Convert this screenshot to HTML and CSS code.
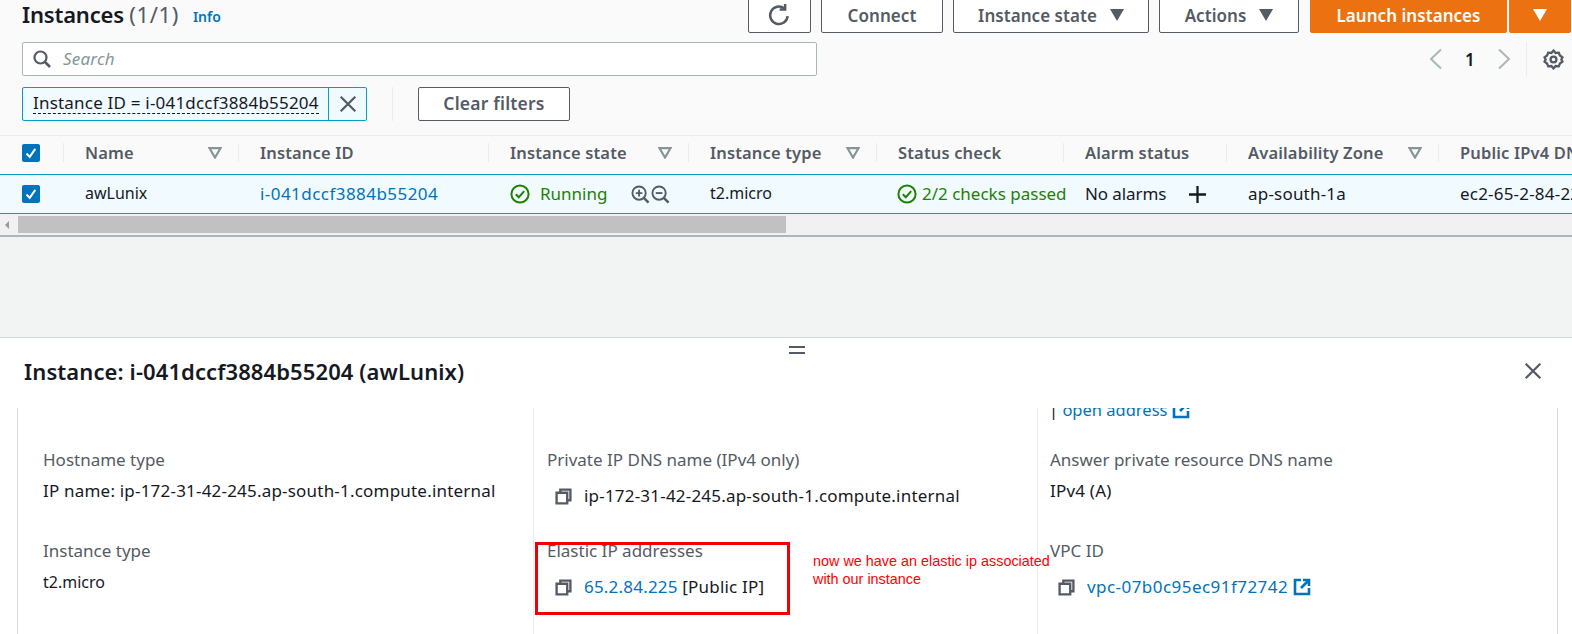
FILE: index.html
```html
<!DOCTYPE html>
<html lang="en">
<head>
<meta charset="utf-8">
<title>Instances</title>
<link rel="stylesheet" href="styles.css">
</head>
<body>
<svg class="defs" width="0" height="0" aria-hidden="true">
  <symbol id="copy" viewBox="0 0 16 16"><path d="M5 4.500V1.500h9.500v10h-3M1.500 4.500h10v10h-10z" fill="none" stroke="currentColor" stroke-width="2.200"/></symbol>
  <symbol id="ext" viewBox="0 0 18 18"><path d="M8 2H2v14h14v-6M10 2h6v6M16 2L8 10" fill="none" stroke="currentColor" stroke-width="2.600"/></symbol>
  <symbol id="tick" viewBox="0 0 20 20"><circle cx="10" cy="10" r="8.600" fill="none" stroke="currentColor" stroke-width="2"/><path d="M5.800 10.200l3 3 5.400-6" fill="none" stroke="currentColor" stroke-width="2"/></symbol>
  <symbol id="caret" viewBox="0 0 14 12"><path d="M0 0h14L7 12z" fill="currentColor"/></symbol>
  <symbol id="sort" viewBox="0 0 14 12"><path d="M1.500 1.200h11L7 10.500z" fill="none" stroke="currentColor" stroke-width="2.200"/></symbol>
  <symbol id="check" viewBox="0 0 18 18"><rect width="18" height="18" rx="2" fill="#0073bb"/><path d="M4.500 9.500l3.200 3.400 5.600-8" fill="none" stroke="#fff" stroke-width="2"/></symbol>
  <symbol id="cross" viewBox="0 0 16 16"><path d="M1.500 1.500l13 13M14.500 1.500l-13 13" fill="none" stroke="currentColor" stroke-width="2"/></symbol>
</svg>

<main class="page">
  <section class="top">
    <header class="head">
      <h1 class="title">Instances <span class="count">(1/1)</span></h1>
      <a class="info">Info</a>
      <div class="actions">
        <button class="btn btn-refresh" aria-label="Refresh">
          <svg class="i-refresh" viewBox="0 0 20 20"><path d="M16.500 10.500a7 7 0 1 1-2.600-6.100" fill="none" stroke="currentColor" stroke-width="2"/><path d="M14.500 0.800v4.400h-4.400" fill="none" stroke="currentColor" stroke-width="2"/></svg>
        </button>
        <button class="btn btn-connect">Connect</button>
        <button class="btn btn-state">Instance state <svg class="i-caret"><use href="#caret"/></svg></button>
        <button class="btn btn-actions">Actions <svg class="i-caret"><use href="#caret"/></svg></button>
        <div class="launch">
          <button class="btn btn-primary btn-launch">Launch instances</button>
          <button class="btn btn-primary btn-more" aria-label="More"><svg class="i-caret"><use href="#caret"/></svg></button>
        </div>
      </div>
    </header>

    <div class="search-row">
      <div class="search">
        <svg class="i-search" viewBox="0 0 18 18"><circle cx="7.500" cy="7.500" r="6" fill="none" stroke="currentColor" stroke-width="2.200"/><path d="M12 12l5 5" stroke="currentColor" stroke-width="2.600"/></svg>
        <span class="placeholder">Search</span>
      </div>
      <div class="pager">
        <svg class="i-chev" viewBox="0 0 14 22"><path d="M12 1.500L2 11l10 9.500" fill="none" stroke="currentColor" stroke-width="2"/></svg>
        <span class="page-num">1</span>
        <svg class="i-chev" viewBox="0 0 14 22"><path d="M2 1.500L12 11 2 20.500" fill="none" stroke="currentColor" stroke-width="2"/></svg>
      </div>
      <div class="settings">
        <svg class="i-gear" viewBox="0 0 20 20"><circle cx="10" cy="10" r="2.800" fill="none" stroke="currentColor" stroke-width="2.200"/><path d="M10 1.500l2 2.300 3-.3 1.100 2.700 2.400 1.800-1 2 1 2-2.400 1.800-1.100 2.700-3-.3-2 2.300-2-2.300-3 .3-1.100-2.700L1.500 12l1-2-1-2 2.400-1.800L5 3.500l3 .3z" fill="none" stroke="currentColor" stroke-width="2.200"/></svg>
      </div>
    </div>

    <div class="filter-row">
      <div class="token">
        <span class="token-text"><span class="token-label">Instance ID = i-041dccf3884b55204</span></span>
        <button class="token-x" aria-label="Remove"><svg class="i-x"><use href="#cross"/></svg></button>
      </div>
      <span class="filter-sep"></span>
      <button class="btn btn-clear">Clear filters</button>
    </div>
  </section>

  <section class="table">
    <div class="tr thead">
      <div class="td td-check"><svg class="i-check"><use href="#check"/></svg></div>
      <div class="td"><span class="cell">Name</span><svg class="i-sort"><use href="#sort"/></svg></div>
      <div class="td"><span class="cell">Instance ID</span></div>
      <div class="td"><span class="cell">Instance state</span><svg class="i-sort"><use href="#sort"/></svg></div>
      <div class="td"><span class="cell">Instance type</span><svg class="i-sort"><use href="#sort"/></svg></div>
      <div class="td"><span class="cell">Status check</span></div>
      <div class="td"><span class="cell">Alarm status</span></div>
      <div class="td"><span class="cell">Availability Zone</span><svg class="i-sort"><use href="#sort"/></svg></div>
      <div class="td"><span class="cell">Public IPv4 DNS</span></div>
    </div>
    <div class="tr tbody">
      <div class="td td-check"><svg class="i-check"><use href="#check"/></svg></div>
      <div class="td"><span class="cell narrow">awLunix</span></div>
      <div class="td"><a class="cell link wide">i-041dccf3884b55204</a></div>
      <div class="td">
        <svg class="i-tick"><use href="#tick"/></svg><span class="cell ok ok-run">Running</span>
        <span class="zooms">
          <svg class="i-zoom" viewBox="0 0 20 20"><circle cx="8.500" cy="8.500" r="7" fill="none" stroke="currentColor" stroke-width="2"/><path d="M13.500 13.500l5 5" stroke="currentColor" stroke-width="2.600"/><path d="M5 8.500h7M8.500 5v7" stroke="currentColor" stroke-width="2"/></svg>
          <svg class="i-zoom" viewBox="0 0 20 20"><circle cx="8.500" cy="8.500" r="7" fill="none" stroke="currentColor" stroke-width="2"/><path d="M13.500 13.500l5 5" stroke="currentColor" stroke-width="2.600"/><path d="M5 8.500h7" stroke="currentColor" stroke-width="2"/></svg>
        </span>
      </div>
      <div class="td"><span class="cell narrow">t2.micro</span></div>
      <div class="td td-status"><svg class="i-tick"><use href="#tick"/></svg><span class="cell ok ok-pass">2/2 checks passed</span></div>
      <div class="td"><span class="cell tight">No alarms</span><svg class="i-plus" viewBox="0 0 18 18"><path d="M9 0v18M0 9h18" stroke="currentColor" stroke-width="2.400"/></svg></div>
      <div class="td"><span class="cell">ap-south-1a</span></div>
      <div class="td"><span class="cell">ec2-65-2-84-225.ap-south-1.compute.amazonaws.com</span></div>
    </div>
    <div class="scrollbar">
      <span class="scroll-arrow"></span>
      <span class="scroll-thumb"></span>
    </div>
  </section>

  <div class="gap"></div>

  <section class="panel">
    <span class="grip"></span>
    <header class="panel-head">
      <h2 class="panel-title">Instance: i-041dccf3884b55204 (awLunix)</h2>
      <svg class="i-close"><use href="#cross"/></svg>
    </header>
    <div class="details">
      <div class="col">
        <div class="field">
          <div class="label">Hostname type</div>
          <div class="value value-plain">IP name: ip-172-31-42-245.ap-south-1.compute.internal</div>
        </div>
        <div class="field">
          <div class="label">Instance type</div>
          <div class="value value-plain narrow">t2.micro</div>
        </div>
      </div>
      <div class="col">
        <div class="field">
          <div class="label">Private IP DNS name (IPv4 only)</div>
          <div class="value value-copy"><svg class="i-copy"><use href="#copy"/></svg>ip-172-31-42-245.ap-south-1.compute.internal</div>
        </div>
        <div class="field">
          <div class="label">Elastic IP addresses</div>
          <div class="value value-copy"><svg class="i-copy"><use href="#copy"/></svg><a class="link">65.2.84.225</a>&nbsp;[Public IP]</div>
        </div>
      </div>
      <div class="col">
        <div class="clipped">| <a class="link">open address</a> <svg class="i-ext"><use href="#ext"/></svg></div>
        <div class="field">
          <div class="label">Answer private resource DNS name</div>
          <div class="value value-plain">IPv4 (A)</div>
        </div>
        <div class="field">
          <div class="label">VPC ID</div>
          <div class="value value-copy"><svg class="i-copy"><use href="#copy"/></svg><a class="link wide">vpc-07b0c95ec91f72742</a><svg class="i-ext i-ext-vpc"><use href="#ext"/></svg></div>
        </div>
      </div>
    </div>
    <span class="redbox"></span>
    <p class="note">now we have an elastic ip associated<br>with our instance</p>
  </section>
</main>
</body>
</html>
```

FILE: styles.css
```css
* { box-sizing: border-box; }
html, body { margin: 0; height: 100%; overflow: hidden; }
body { font-family: "Noto Sans", "Liberation Sans", sans-serif; font-size: 17px; letter-spacing: .2px; color: #16191f; background: #f2f3f3; }
.defs { position: absolute; }
.page { display: flex; flex-direction: column; height: 634px; width: 1572px; overflow: hidden; }
a { text-decoration: none; }
.link { color: #0073bb; }
.wide { letter-spacing: .45px; }
.narrow { font-size: 16px; letter-spacing: 0; }
.tight { letter-spacing: -.1px; }

.top { background: #fafafa; padding: 0 0 14px 22px; height: 135px; }
.head { display: flex; align-items: center; height: 36px; margin-top: -3px; margin-bottom: 9px; }
.title { margin: 0 0 2px; font-size: 22px; font-weight: 600; line-height: 30px; letter-spacing: -.2px; color: #16191f; }
.count { font-weight: 400; color: #545b64; letter-spacing: .6px; }
.info { font-size: 14px; font-weight: 600; letter-spacing: 0; color: #0073bb; margin-left: 14px; margin-top: 3px; }
.actions { margin-left: auto; display: flex; gap: 10px; margin-right: 1px; }
.btn { height: 36px; border: 1px solid #545b64; border-radius: 2px; background: #fff; color: #545b64; font: 600 17px "Noto Sans", sans-serif; letter-spacing: .05px; display: flex; align-items: center; justify-content: center; gap: 13px; padding: 0; }
.btn-refresh { width: 63px; }
.btn-connect { width: 122px; }
.btn-state { width: 196px; }
.btn-actions { width: 140px; }
.launch { display: flex; gap: 2px; margin-left: 1px; }
.btn-primary { background: #ec7211; border-color: #ec7211; color: #fff; }
.btn-launch { width: 197px; }
.btn-more { width: 62px; }
.i-refresh { width: 25px; height: 25px; color: #545b64; }
.i-caret { width: 14px; height: 12px; }

.search-row { display: flex; align-items: center; height: 34px; margin-bottom: 11px; }
.search { width: 795px; height: 34px; border: 1px solid #aab7b8; border-radius: 2px; background: #fff; display: flex; align-items: center; padding-left: 10px; gap: 12px; }
.i-search { width: 18px; height: 18px; color: #545b64; }
.placeholder { font-style: italic; color: #879596; margin-bottom: 2px; }
.pager { margin-left: auto; display: flex; align-items: center; gap: 22px; color: #aab7b8; margin-right: 15px; }
.i-chev { width: 14px; height: 22px; }
.page-num { color: #16191f; font-weight: 600; font-size: 17px; }
.settings { border-left: 1px solid #eaeded; height: 34px; width: 46px; display: flex; align-items: center; padding-left: 16px; }
.i-gear { width: 21px; height: 21px; color: #545b64; }

.filter-row { display: flex; align-items: center; height: 34px; }
.token { display: flex; width: 345px; height: 34px; border: 1px solid #00a1c9; border-radius: 2px; background: #f1faff; }
.token-text { flex: 1; display: flex; align-items: center; padding: 0 0 1px 10px; }
.token-label { border-bottom: 1px dashed #16191f; line-height: 20px; white-space: nowrap; }
.token-x { width: 38px; border: 0; border-left: 1px solid #00a1c9; background: transparent; color: #545b64; padding: 0; display: flex; align-items: center; justify-content: center; }
.i-x { width: 18px; height: 18px; }
.filter-sep { width: 1px; height: 34px; background: #eaeded; margin: 0 25px; }
.btn-clear { width: 152px; height: 34px; padding-bottom: 2px; font-size: 17.500px; letter-spacing: .2px; }

.table { background: #fff; }
.tr { display: grid; grid-template-columns: 64px 175px 250px 200px 188px 187px 163px 212px 1fr; }
.thead { height: 39px; padding-bottom: 5px; background: #fafafa; border-top: 1px solid #eaeded; color: #545b64; font-weight: 600; font-size: 16.500px; letter-spacing: .15px; align-items: center; }
.tbody { height: 40px; background: #f1faff; border-top: 1px solid #00a1c9; border-bottom: 1px solid #00a1c9; align-items: center; }
.tbody .cell { margin-bottom: 2px; }
.td { display: flex; align-items: center; height: 100%; padding-left: 21px; white-space: nowrap; overflow: hidden; }
.thead .td { height: 19px; border-right: 1px solid #eaeded; overflow: visible; }
.thead .td:last-child { border-right: 0; }
.td-check { padding-left: 22px; }
.td-status { padding-left: 20px; overflow: visible; }
.i-check { width: 18px; height: 18px; }
.i-sort { width: 14px; height: 12px; color: #879596; margin-left: auto; margin-right: 16px; flex: none; }
.ok { color: #1d8102; letter-spacing: 0; }
.i-tick { width: 20px; height: 20px; color: #1d8102; flex: none; }
.ok-run { margin-left: 10px; }
.ok-pass { margin-left: 5px; }
.zooms { display: flex; margin-left: 24px; color: #545b64; gap: 1px; }
.i-zoom { width: 19px; height: 19px; }
.i-plus { width: 17px; height: 17px; color: #16191f; margin-left: 23px; flex: none; }
.scrollbar { height: 23px; background: #f1f1f1; border-bottom: 2px solid #aab7b8; display: flex; align-items: center; }
.scroll-arrow { width: 0; height: 0; border: 4px solid transparent; border-right: 4px solid #9a9a9a; margin-left: 1px; }
.scroll-thumb { width: 768px; height: 17px; background: #c1c1c1; margin-left: 9px; }

.gap { flex: none; height: 101px; background: #f2f3f3; border-bottom: 1px solid #d5dbdb; }

.panel { flex: 1; background: #fff; position: relative; display: flex; flex-direction: column; }
.grip { position: absolute; left: 789px; top: 8px; width: 16px; height: 8px; border-top: 2px solid #545b64; border-bottom: 2px solid #545b64; }
.panel-head { display: flex; align-items: center; justify-content: space-between; height: 70px; padding: 0 30px 4px 24px; flex: none; }
.panel-title { margin: 0; font-size: 22px; font-weight: 600; letter-spacing: .1px; color: #16191f; }
.i-close { width: 18px; height: 18px; color: #545b64; }
.details { flex: 1; display: grid; grid-template-columns: 516px 504px 520px; margin-left: 17px; border-left: 1px solid #d5dbdb; overflow: hidden; }
.col { border-right: 1px solid #eaeded; padding: 41px 0 0 25px; position: relative; }
.col:last-child { border-right: 1px solid #d5dbdb; }
.col:nth-child(2) { padding-left: 13px; }
.col:nth-child(3) { padding-left: 12px; }
.field { min-height: 91px; }
.label { color: #545b64; line-height: 22px; letter-spacing: 0; }
.value { margin-top: 9px; line-height: 22px; white-space: nowrap; }
.value-copy { margin-top: 14px; display: flex; align-items: center; padding-left: 8px; }
.i-copy { width: 17px; height: 17px; color: #545b64; margin-right: 12px; flex: none; }
.i-ext { width: 18px; height: 18px; color: #0073bb; vertical-align: -3px; }
.i-ext-vpc { margin-left: 5px; }
.clipped { position: absolute; top: -9px; left: 11px; line-height: 22px; white-space: nowrap; font-size: 16.500px; letter-spacing: 0; }
.redbox { position: absolute; left: 535px; top: 204px; width: 255px; height: 73px; border: 3px solid #f00000; }
.note { position: absolute; margin: 0; left: 813px; top: 214px; color: #f00; font-family: "Liberation Sans", sans-serif; font-size: 14.400px; letter-spacing: 0; line-height: 18px; }
```
